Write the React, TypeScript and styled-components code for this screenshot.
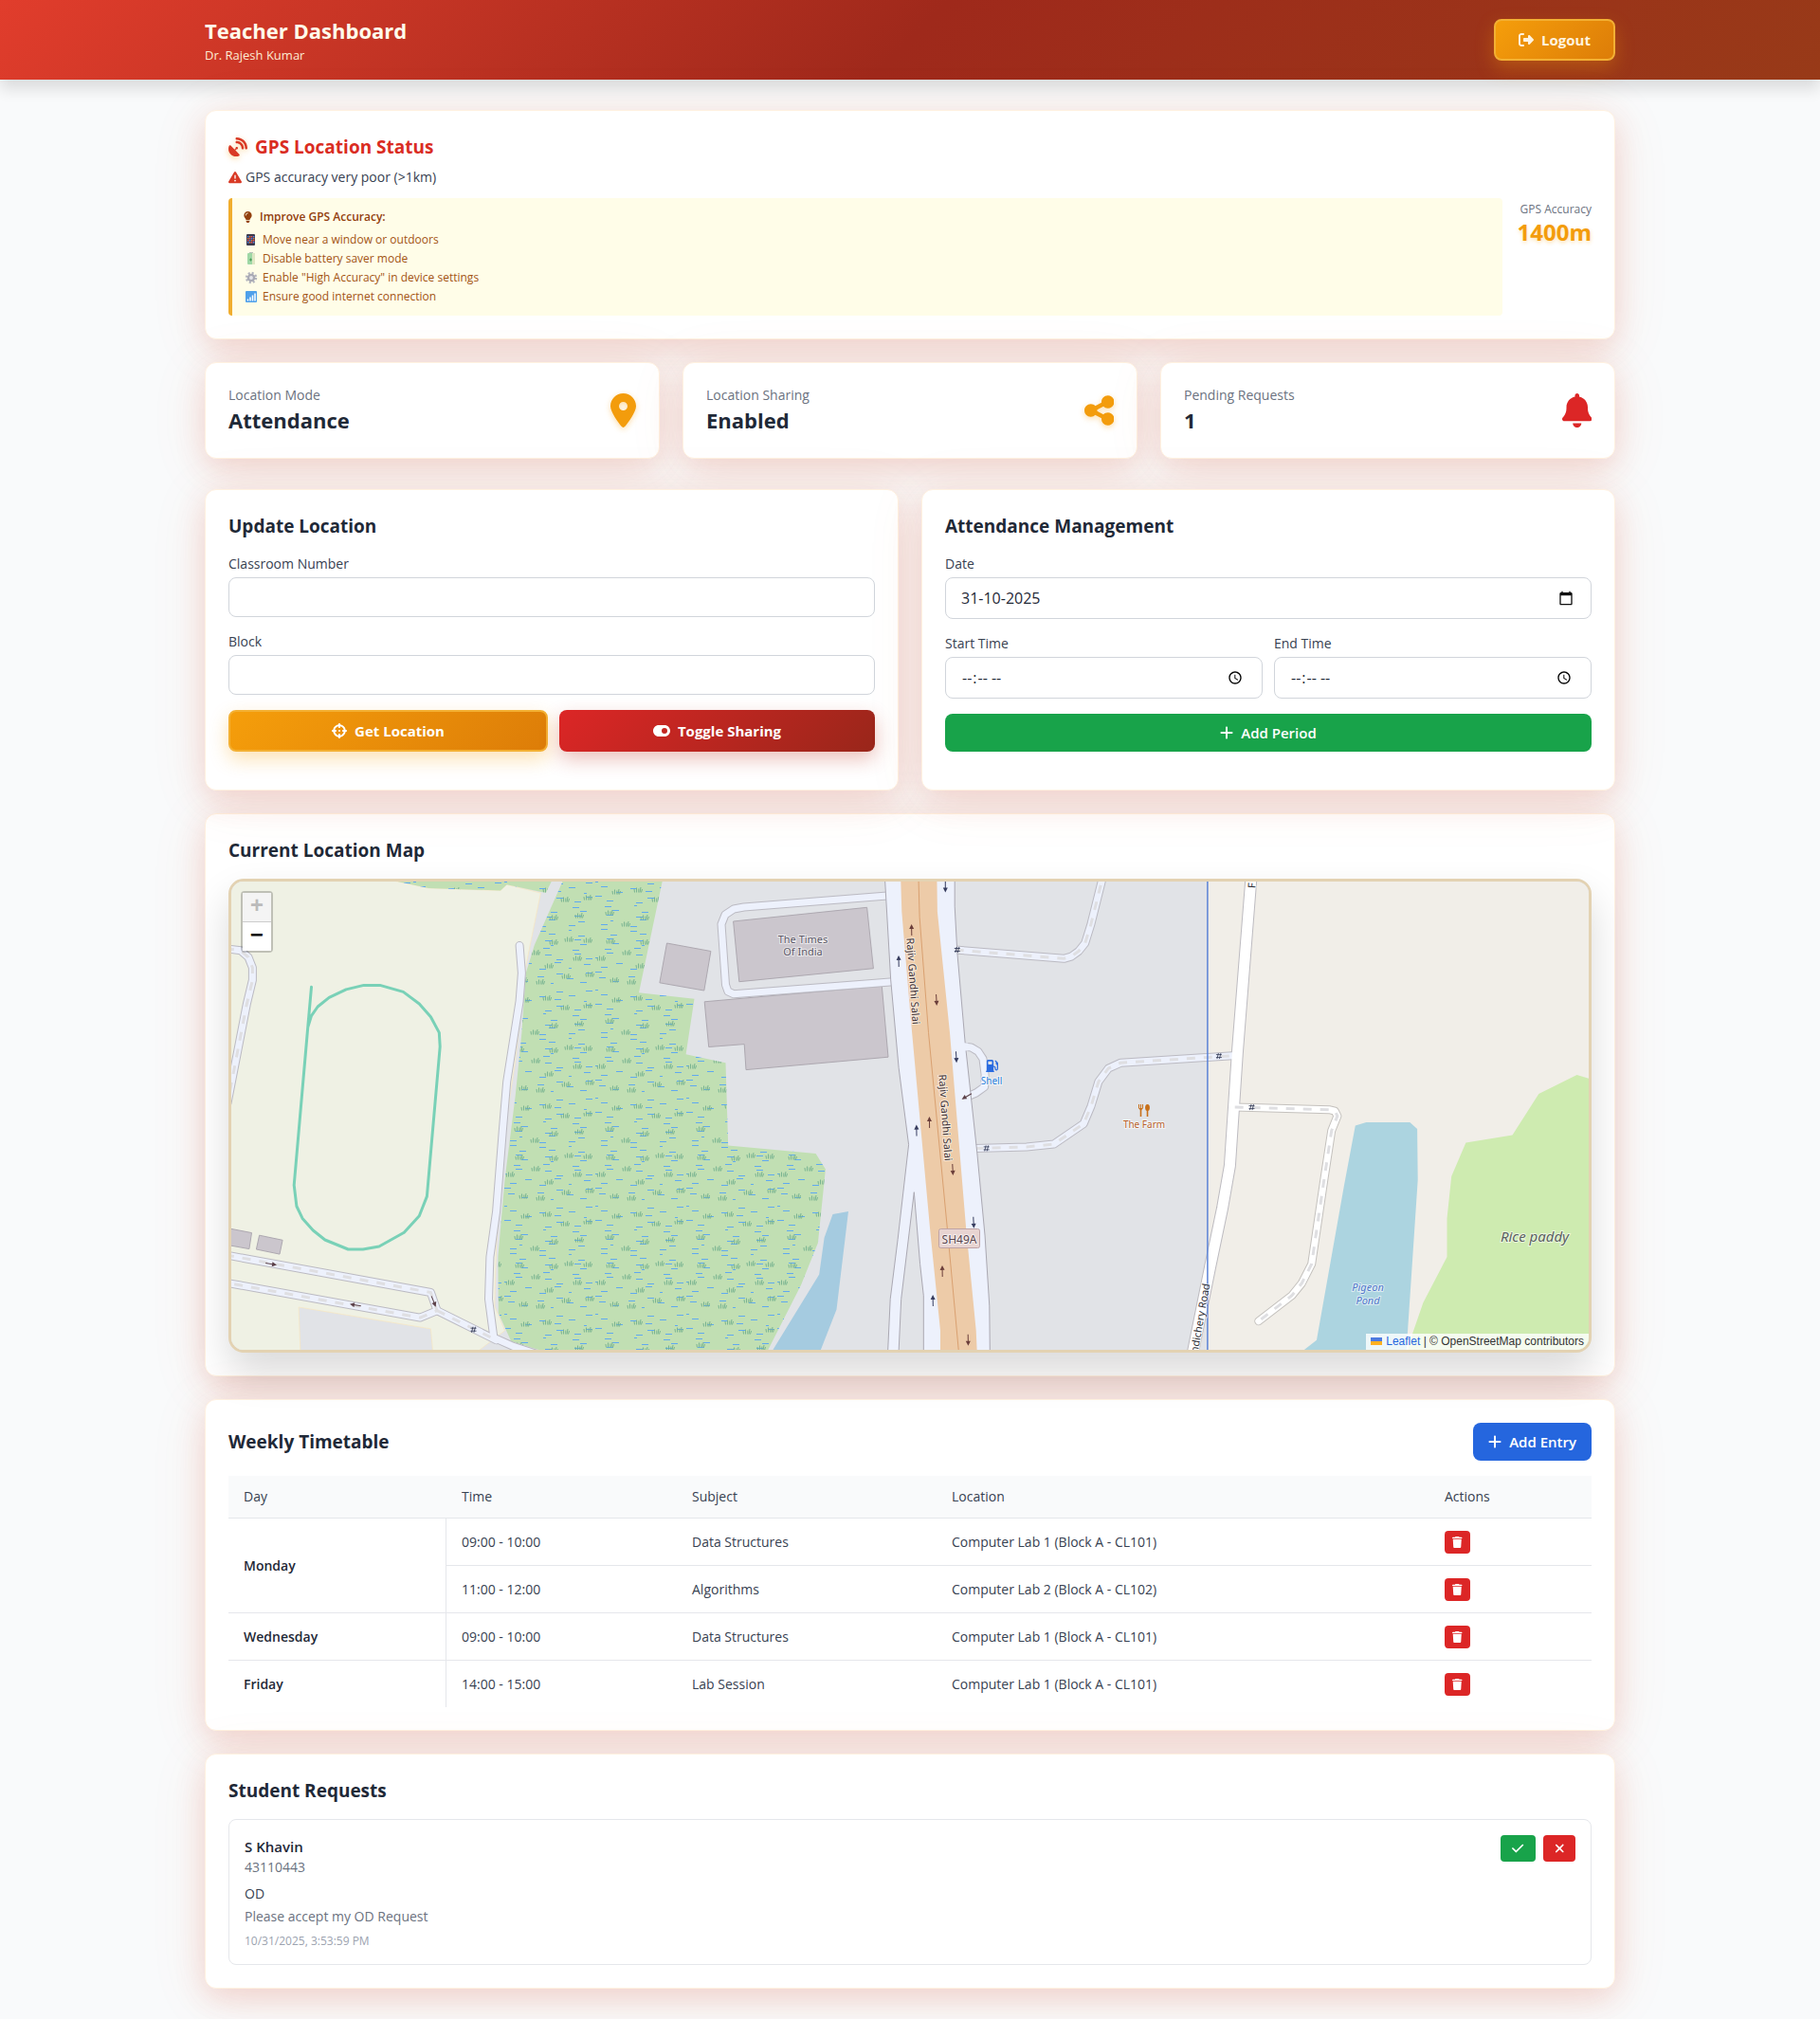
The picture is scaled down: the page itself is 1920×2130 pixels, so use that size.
import React from 'react';
import styled, { createGlobalStyle, css } from 'styled-components';
import {
  FaBell,
  FaCheck,
  FaCrosshairs,
  FaGasPump,
  FaLightbulb,
  FaLocationDot,
  FaPlus,
  FaRightFromBracket,
  FaSatelliteDish,
  FaShareNodes,
  FaToggleOn,
  FaTrash,
  FaTriangleExclamation,
  FaXmark,
} from 'react-icons/fa6';

const color = {
  ink: '#1f2937',
  text: '#374151',
  muted: '#6b7280',
  faint: '#9ca3af',
  line: '#e5e7eb',
  field: '#d1d5db',
  page: '#f9fafb',
  red: '#dc2626',
  vermilion: '#d93a26',
  amber: '#f39c0c',
  green: '#18a34a',
  blue: '#2566de',
};

const GlobalStyle = createGlobalStyle`
  *, *::before, *::after { box-sizing: border-box; }
  body {
    margin: 0;
    background: ${color.page};
    color: ${color.ink};
    font-family: 'Segoe UI', 'Open Sans', sans-serif;
    font-size: 16px;
    line-height: 24px;
  }
  h1, h2, h3, p, ul { margin: 0; padding: 0; }
  ul { list-style: none; }
  button, input { font: inherit; }
`;

// Icons are one em high; $w is the drawing's width on its 512-unit grid.
const Glyph = styled.span<{ $w?: number }>`
  display: flex;
  flex: none;
  svg {
    height: 1em;
    width: calc(1em * ${(p) => p.$w ?? 512} / 512);
  }
`;

/* ---------- page frame ---------- */

const Header = styled.header`
  position: relative;
  background: linear-gradient(135deg, #e13d2c 0%, #9f291b 50%, #983a18 100%);
  box-shadow: 0 10px 15px rgba(0, 0, 0, 0.12);
`;

const Container = styled.div`
  max-width: 1536px;
  margin: 0 auto;
  padding: 0 24px;
`;

const HeaderRow = styled(Container)`
  display: flex;
  align-items: center;
  justify-content: space-between;
  padding-top: 16px;
  padding-bottom: 16px;
`;

const Title = styled.h1`
  font-size: 22px;
  line-height: 32px;
  font-weight: 700;
  color: #fffbeb;
`;

const Subtitle = styled.p`
  font-size: 13px;
  line-height: 20px;
  color: #fdebd3;
`;

const Main = styled(Container).attrs({ as: 'main' })`
  display: flex;
  flex-direction: column;
  gap: 24px;
  padding-top: 32px;
  padding-bottom: 32px;
`;

const Card = styled.section<{ $raised?: boolean }>`
  ${(p) => p.$raised && css`position: relative;`}
  padding: 24px;
  background: #fff;
  border: 1px solid #fff1e0;
  border-radius: 12px;
  box-shadow:
    0 10px 32px rgba(220, 50, 30, 0.16),
    0 8px 60px rgba(217, 119, 60, 0.1);
`;

const CardTitle = styled.h2<{ $gap?: number }>`
  margin-bottom: ${(p) => p.$gap ?? 16}px;
  font-size: 19px;
  line-height: 28px;
  font-weight: 700;
`;

/* ---------- buttons ---------- */

const Button = styled.button<{ $tone: 'amber' | 'red' | 'green' | 'blue'; $grow?: boolean }>`
  display: inline-flex;
  align-items: center;
  justify-content: center;
  gap: 8px;
  padding: 8px 16px;
  border: 0;
  border-radius: 8px;
  color: #fff;
  font-size: 15px;
  font-weight: 600;
  cursor: pointer;
  ${Glyph} { font-size: 16px; }
  ${(p) => p.$grow && css`flex: 1;`}
  ${(p) =>
    p.$tone === 'amber' &&
    css`
      border: 2px solid #f3b033;
      background: linear-gradient(135deg, #f59e0b, #dd7d08);
      font-weight: 700;
      box-shadow: 0 8px 20px rgba(245, 158, 11, 0.3);
    `}
  ${(p) =>
    p.$tone === 'red' &&
    css`
      background: linear-gradient(135deg, #dc2626, #99261a);
      font-weight: 700;
      box-shadow: 0 8px 20px rgba(190, 50, 30, 0.3);
    `}
  ${(p) => p.$tone === 'green' && css`background: ${color.green};`}
  ${(p) => p.$tone === 'blue' && css`background: ${color.blue};`}
`;

const LogoutButton = styled(Button)`
  padding: 8px 24px;
  color: #fff3df;
`;

const SmallButton = styled.button<{ $tone: 'red' | 'green'; $size?: 'xs' }>`
  display: inline-flex;
  align-items: center;
  padding: ${(p) => (p.$size === 'xs' ? '4px 8px' : '4px 12px')};
  border: 0;
  border-radius: 4px;
  background: ${(p) => color[p.$tone]};
  color: #fff;
  font-size: ${(p) => (p.$size === 'xs' ? 12 : 14)}px;
  line-height: ${(p) => (p.$size === 'xs' ? 16 : 20)}px;
  height: ${(p) => (p.$size === 'xs' ? 24 : 28)}px;
  cursor: pointer;
`;

/* ---------- GPS status ---------- */

const GpsCard = styled(Card)`
  display: flex;
  align-items: center;
  gap: 16px;
`;

const GpsBody = styled.div`
  flex: 1;
`;

const GpsTitle = styled(CardTitle)`
  display: flex;
  align-items: center;
  gap: 8px;
  color: #da2c22;
  ${Glyph} {
    font-size: 20px;
    color: ${color.vermilion};
    filter: drop-shadow(0 2px 3px rgba(245, 158, 11, 0.4));
  }
`;

const GpsMessage = styled.p`
  display: flex;
  align-items: center;
  gap: 4px;
  margin-bottom: 12px;
  font-size: 14px;
  line-height: 20px;
  color: ${color.text};
  ${Glyph} { color: ${color.vermilion}; }
`;

const Tips = styled.div`
  padding: 12px;
  border-left: 4px solid #f0ad2e;
  border-radius: 4px;
  background: #fffde8;
  font-size: 12px;
  line-height: 16px;
  color: #a35414;
`;

const TipsTitle = styled.p`
  display: flex;
  align-items: center;
  gap: 8px;
  margin-bottom: 8px;
  font-weight: 600;
  color: #92400e;
`;

const TipList = styled.ul`
  display: flex;
  flex-direction: column;
  gap: 4px;
`;

const Tip = styled.li`
  display: flex;
  align-items: center;
  gap: 4px;
`;

const Accuracy = styled.div`
  text-align: right;
`;

const AccuracyLabel = styled.p`
  font-size: 12px;
  line-height: 16px;
  color: ${color.muted};
`;

const AccuracyValue = styled.p`
  font-size: 24px;
  line-height: 32px;
  font-weight: 700;
  color: ${color.amber};
  text-shadow: 0 2px 4px rgba(245, 158, 11, 0.3);
`;

/* ---------- stat cards ---------- */

const StatGrid = styled.div`
  display: grid;
  grid-template-columns: repeat(3, 1fr);
  gap: 24px;
  margin-bottom: 8px;
`;

const StatCard = styled(Card)`
  display: flex;
  align-items: center;
  justify-content: space-between;
`;

const StatLabel = styled.p`
  font-size: 14px;
  line-height: 20px;
  color: ${color.muted};
`;

const StatValue = styled.p`
  font-size: 22px;
  line-height: 32px;
  font-weight: 700;
`;

const StatIcon = styled(Glyph)<{ $tone: 'amber' | 'red' }>`
  font-size: 36px;
  color: ${(p) => color[p.$tone]};
  ${(p) => p.$tone === 'amber' && css`filter: drop-shadow(0 2px 3px rgba(245, 158, 11, 0.35));`}
`;

/* ---------- forms ---------- */

const FormGrid = styled.div`
  display: grid;
  grid-template-columns: 1fr 1fr;
  gap: 24px;
`;

const Form = styled.form`
  display: flex;
  flex-direction: column;
  gap: 16px;
  margin-bottom: 16px;
`;

const Field = styled.div`
  display: flex;
  flex-direction: column;
  gap: 4px;
  min-width: 0;
`;

const Label = styled.label`
  font-size: 14px;
  line-height: 20px;
  font-weight: 500;
  color: ${color.text};
`;

const Input = styled.input<{ $tall?: boolean }>`
  width: 100%;
  height: ${(p) => (p.$tall ? 44 : 42)}px;
  padding: 8px 16px;
  border: 1px solid ${color.field};
  border-radius: 8px;
  background: #fff;
  color: ${color.ink};
`;

const DateBox = styled.div`
  display: flex;
  align-items: center;
  height: 44px;
  padding-right: 16px;
  border: 1px solid ${color.field};
  border-radius: 8px;
  background: #fff;
`;

const DateInput = styled.input`
  flex: 1;
  min-width: 0;
  padding: 8px 16px;
  border: 0;
  background: none;
  color: ${color.ink};
  outline: 0;
`;

const PickerButton = styled.button`
  display: flex;
  padding: 2px;
  border: 0;
  background: none;
  color: #111;
`;

const TwoColumns = styled.div`
  display: grid;
  grid-template-columns: 1fr 1fr;
  gap: 12px;
`;

const ButtonRow = styled.div`
  display: flex;
  gap: 12px;
`;

/* ---------- map ---------- */

const MapFrame = styled.div`
  position: relative;
  height: 500px;
  overflow: hidden;
  border: 3px solid #e3d2b2;
  border-radius: 16px;
  background: #e1e3e7;
  box-shadow: 0 20px 40px rgba(0, 0, 0, 0.15);
`;

const MapDrawing = styled.svg`
  display: block;
  width: 100%;
  height: 100%;
  font-family: 'Noto Sans', sans-serif;
`;

const ZoomControl = styled.div`
  position: absolute;
  top: 10px;
  left: 10px;
  border: 2px solid rgba(0, 0, 0, 0.2);
  border-radius: 4px;
  background-clip: padding-box;
`;

const ZoomButton = styled.button`
  display: block;
  width: 30px;
  height: 30px;
  padding: 0;
  border: 0;
  background: #fff;
  color: #000;
  font: bold 24px/30px 'Liberation Mono', monospace;
  & + & { border-top: 1px solid #ccc; height: 31px; }
  &:disabled { background: #f4f4f4; color: #bbb; }
`;

const Attribution = styled.div`
  position: absolute;
  right: 0;
  bottom: 0;
  padding: 0 5px;
  background: rgba(255, 255, 255, 0.8);
  font: 12px/17px 'Liberation Sans', sans-serif;
  color: #333;
  a { color: ${color.blue}; text-decoration: none; }
  a svg { margin-right: 4px; }
`;

/* ---------- timetable ---------- */

const CardHead = styled.div`
  display: flex;
  align-items: center;
  justify-content: space-between;
  margin-bottom: 16px;
`;

const Table = styled.table`
  width: 100%;
  table-layout: fixed;
  border-collapse: separate;
  border-spacing: 0;
  font-size: 14px;
  line-height: 20px;
  color: ${color.text};
`;

const HeadCell = styled.th`
  height: 44px;
  padding: 0 16px;
  background: ${color.page};
  font-weight: 500;
  text-align: left;
`;

const Cell = styled.td`
  height: 50px;
  padding: 0 16px;
  border-top: 1px solid ${color.line};
`;

const DayCell = styled.th`
  padding: 0 16px;
  border-top: 1px solid ${color.line};
  border-right: 1px solid ${color.line};
  font-weight: 600;
  text-align: left;
  color: ${color.ink};
`;

const CellAction = styled.div`
  display: flex;
`;

/* ---------- requests ---------- */

const Request = styled.article`
  display: flex;
  align-items: flex-start;
  justify-content: space-between;
  padding: 16px;
  border: 1px solid ${color.line};
  border-radius: 8px;
`;

const RequestName = styled.p`
  font-size: 15px;
  font-weight: 600;
`;

const RequestLine = styled.p<{ $tone?: 'text'; $top?: number }>`
  margin-top: ${(p) => p.$top ?? 0}px;
  font-size: 14px;
  line-height: 20px;
  color: ${(p) => (p.$tone === 'text' ? color.text : color.muted)};
`;

const RequestTime = styled.p`
  margin-top: 8px;
  font-size: 12px;
  line-height: 16px;
  color: ${color.faint};
`;

const RequestActions = styled.div`
  display: flex;
  gap: 8px;
`;

/* ---------- small drawings ---------- */

const tipIcon = { width: 16, height: 14, viewBox: '0 0 16 14', 'aria-hidden': true };

const PhoneIcon = () => (
  <svg {...tipIcon}>
    <rect x="3" y="1" width="9" height="12" rx="1" fill="#3c3a4c" />
    {[3, 5, 7, 9].map((y, r) =>
      [4, 6, 8, 10].map((x, c) => (
        <rect key={`${x}${y}`} x={x} y={y} width="1.4" height="1.4" fill={['#4c8df0', '#f07a3c', '#e8546a'][(r + c) % 3]} />
      )),
    )}
  </svg>
);

const BatteryIcon = () => (
  <svg {...tipIcon}>
    <rect x="6" y="0" width="4" height="2" fill="#b9c0b8" />
    <rect x="4" y="1" width="8" height="12" rx="1" fill="#9fd7a5" />
    <rect x="9" y="1" width="3" height="12" fill="#dfe7c4" />
    <path d="M6 8h3M7.500 6.500v3" stroke="#4b9a58" fill="none" />
  </svg>
);

const GearIcon = () => (
  <svg {...tipIcon}>
    <circle cx="8" cy="7" r="5" fill="none" stroke="#b4b5be" strokeWidth="2.400" strokeDasharray="2 1.930" />
    <circle cx="8" cy="7" r="3.100" fill="#e6e6ea" stroke="#a9aab4" strokeWidth="2.400" />
  </svg>
);

const SignalIcon = () => (
  <svg {...tipIcon}>
    <rect x="2" y="1" width="12" height="12" rx="1" fill="#4fa0ea" />
    <path d="M4.500 11.500v-2M7 11.500v-4M9.500 11.500v-6M12 11.500v-8" stroke="#fff" strokeWidth="1.500" />
  </svg>
);

const CalendarIcon = () => (
  <svg width="16" height="16" viewBox="0 0 24 24" aria-hidden="true">
    <path
      fill="currentColor"
      d="M20 3h-1V1h-2v2H7V1H5v2H4c-1.100 0-2 .9-2 2v16c0 1.100.9 2 2 2h16c1.100 0 2-.9 2-2V5c0-1.100-.9-2-2-2zm0 18H4V8h16v13z"
    />
  </svg>
);

/* ---------- map drawing ---------- */

type Sheet = (points: string) => string;
const sheet = (sx: number, ox: number): Sheet => (points) =>
  points
    .split(' ')
    .map((pair) => {
      const [x, y] = pair.split(',').map(Number);
      return `${(x * sx + ox).toFixed(1)},${(y * 0.36992 - 70).toFixed(1)}`;
    })
    .join(' ');
const west = sheet(0.44643, -24);
const east = sheet(0.52296, 656);

const MARSH = [
  west('430,185 812,185 797,222 705,198 690,215 520,208'),
  west('838,185 1073,185 1017,506 1148,524 1128,682 1222,706 1228,942 1435,965 1458,1010 1440,1220 1400,1340 1320,1530 795,1530 715,1500 685,1420 684,1260 700,1040 725,800 740,620 750,450 770,370'),
];

const BUILDINGS = [
  west('50,1179 102,1191 96,1237 50,1227'),
  west('120,1198 175,1212 168,1252 113,1238'),
  west('1083,365 1187,388 1171,500 1066,478'),
  '529.600,42 670.600,27.300 677.400,91.700 535.800,105.700',
  '499.200,126.800 686.300,110.200 693,185.200 543,198.600 541.200,171.600 503.700,174.500',
];

const SERVICE_ROADS = [
  west('735,372 740,450 735,530 705,760 695,900 680,1130 665,1260 662,1380 674,1490 720,1515 810,1550'),
  '692,15 540.700,27 530,29 521,35 517,45 521.500,109 524,116 530,118.700 676,107.600 698,105.700',
  east('222,660 238,662 252,674 262,695 266,740 265,775 248,792 222,808'),
];

const TRACKS = [
  west('40,380 76,386 94,405 104,435 104,470 90,540 58,740 45,820'),
  west('40,1254 525,1361 540,1413 500,1433 40,1333'),
  west('540,1413 680,1497'),
  east('206,384 425,409 440,403 455,388 468,365 480,310 503,180'),
  east('246,950 350,946 405,938 465,880 480,830 495,760 515,722 540,706 765,686'),
];

const LANES = [east('770,833 960,840 972,844 977,858 965,900 950,1040 925,1280 905,1335 885,1370 818,1443')];

const TRUNK_SIDE = east(
  '64,180 76,470 92,720 112,940 90,1210 75,1380 70,1530 92,1530 97,1380 123,1075 135,1280 142,1370 142,1530 276,1530 275,1400 266,1200 250,960 226,650 210,390 205,260 205,180',
);
const TRUNK = east('96,180 98,275 115,560 155,1180 176,1470 176,1530 250,1530 248,1470 228,1180 195,620 170,275 169,180');
const TRUNK_AXIS = east('132,180 134,290 152,620 190,1180 213,1530');
const MAIN_ROAD = east('803,180 775,680 760,1000 745,1120 720,1290 685,1535');

const RUNNING_TRACK = west(
  '243,490 235,600 202,1055 208,1115 222,1150 247,1184 275,1211 330,1238 365,1238 403,1230 462,1190 498,1143 516,1087 547,660 545,620 525,575 498,538 460,504 405,485 367,485 325,497 285,520 258,546 243,572 235,604',
);

const ARROWS: [string, number, string][] = [
  [east('118,327'), -91, '#6b3e3a'],
  [east('92,416'), -91, '#363c5e'],
  [east('154,876'), -91, '#6b3e3a'],
  [east('128,899'), -91, '#363c5e'],
  [east('180,1300'), -91, '#6b3e3a'],
  [east('161,1384'), -91, '#363c5e'],
  [east('186,204'), 90, '#363c5e'],
  [east('168,527'), 87, '#6b3e3a'],
  [east('208,690'), 87, '#363c5e'],
  [east('201,1011'), 87, '#6b3e3a'],
  [east('243,1162'), 87, '#363c5e'],
  [east('232,1497'), 89, '#6b3e3a'],
  [east('229,802'), 150, '#5b4048'],
  [west('148,1280'), 10, '#5b4048'],
  [west('347,1397'), 190, '#5b4048'],
  [west('532,1387'), 68, '#5b4048'],
];

const GATES = [east('210,384'), east('269,950'), east('738,687'), east('804,833'), west('626,1467')];

const TUFTS = [
  [22, 11], [45, 9], [64, 19], [88, 17], [15, 33], [52, 38], [79, 36], [32, 45], [16, 63], [52, 64],
  [68, 61], [33, 75], [6, 81], [77, 81], [47, 89], [88, 62], [65, 100], [20, 104], [38, 106], [90, 98],
];
const DASHES = Array.from({ length: 66 }, (_, i) => {
  const row = Math.floor(i / 3);
  const jitter = (row * row * 17 + (i % 3) * 71 + row * 13) % 24;
  return [(i % 3) * 32 + jitter, row * 5 + (jitter % 3)];
});

const Line = ({ points, width, stroke, dash }: { points: string; width: number; stroke: string; dash?: string }) => (
  <polyline
    points={points}
    fill="none"
    stroke={stroke}
    strokeWidth={width}
    strokeDasharray={dash}
    strokeLinejoin="round"
    strokeLinecap={dash ? 'butt' : 'round'}
  />
);

const MapLabel = ({
  x, y, size, fill, angle = 0, italic, anchor = 'middle', children,
}: {
  x: number; y: number; size: number; fill: string; angle?: number; italic?: boolean;
  anchor?: 'middle' | 'end'; children: string;
}) => (
  <text
    transform={`translate(${x} ${y}) rotate(${angle})`}
    fontSize={size}
    fill={fill}
    fontStyle={italic ? 'italic' : 'normal'}
    textAnchor={anchor}
    dominantBaseline="central"
    stroke="rgba(255,255,255,0.6)"
    strokeWidth="2"
    paintOrder="stroke"
  >
    {children}
  </text>
);

const CampusMap = () => (
  <MapDrawing viewBox="0 0 1432 494" preserveAspectRatio="xMidYMid slice" role="img" aria-label="Map around Rajiv Gandhi Salai">
    <defs>
      <pattern id="marsh" width="96" height="114" patternUnits="userSpaceOnUse">
        <rect width="96" height="114" fill="#c1dfb3" />
        {DASHES.map(([x, y], i) => (
          <rect key={i} x={x} y={y} width={i % 8 === 0 ? 3 : 7} height="1" fill="#5fa9f0" />
        ))}
        {TUFTS.map(([x, y], i) => (
          <path key={i} transform={`translate(${x} ${y})`} d="M-3.500 2.500L-4-1M-1.500 2.500V-2.500M.8 2.500V-1.500M2 2.500L3-3M3.500 2.500L4.500-1" stroke="#78b390" fill="none" />
        ))}
      </pattern>
    </defs>
    <rect width="1432" height="494" fill="#e1e3e7" />
    <polygon points={east('715,180 1500,180 1500,1540 715,1540')} fill="#f1eee8" />
    <polygon
      points={west('40,180 430,185 520,208 690,215 705,198 785,222 750,430 725,700 700,900 680,1230 676,1400 700,1470 635,1530 530,1530 525,1465 213,1403 217,1530 40,1530')}
      fill="#eff1e4"
      stroke="#f8e6c0"
      strokeWidth="0.700"
    />
    {MARSH.map((points) => <polygon key={points} points={points} fill="url(#marsh)" />)}
    <polygon points={west('1475,1138 1512,1130 1484,1410 1445,1530 1331,1530 1443,1310 1455,1205')} fill="#a5cbe0" />
    <polygon points={east('1013,885 1035,876 1123,876 1138,895 1139,1040 1116,1530 905,1530 935,1497 990,1060')} fill="#acd4e0" />
    <polygon points={east('1500,758 1460,741 1383,795 1330,912 1236,934 1207,1030 1198,1150 1198,1260 1150,1390 1128,1480 1118,1530 1500,1530')} fill="#ceebb0" />
    {BUILDINGS.map((points) => <polygon key={points} points={points} fill="#cbc6cd" stroke="#ada8b0" />)}

    {[...SERVICE_ROADS, ...TRACKS].map((p) => <Line key={p} points={p} width={9} stroke="#bbbac2" />)}
    {LANES.map((p) => <Line key={p} points={p} width={9} stroke="#c4c1bd" />)}
    <Line points={MAIN_ROAD} width={13} stroke="#bdbbc0" />
    {[...SERVICE_ROADS, ...TRACKS].map((p) => <Line key={p} points={p} width={7} stroke="#edf1fc" />)}
    {LANES.map((p) => <Line key={p} points={p} width={7} stroke="#fff" />)}
    <Line points={MAIN_ROAD} width={11} stroke="#fff" />
    {[...TRACKS, ...LANES].map((p) => <Line key={p} points={p} width={3} stroke="#dfdfe2" dash="9 9" />)}

    <polygon points={TRUNK_SIDE} fill="#edf1fc" stroke="#aaa8b2" />
    <polygon points={east('200,648 232,650 232,672 200,672')} fill="#edf1fc" />
    <polygon points={TRUNK} fill="#edcba8" />
    <Line points={TRUNK_AXIS} width={1} stroke="#d9a070" />
    <Line points={RUNNING_TRACK} width={3} stroke="#79d1b7" />
    <Line points={east('715,180 715,1540')} width={1.5} stroke="#5a82d6" />

    {ARROWS.map(([at, angle, stroke]) => (
      <g key={at} transform={`translate(${at}) rotate(${angle})`}>
        <path d="M-6 0H3" stroke={stroke} />
        <path d="M6 0L1-2.500V2.500Z" fill={stroke} />
      </g>
    ))}
    {GATES.map((at) => (
      <path key={at} transform={`translate(${at})`} d="M-3-1.500H3M-3 1.500H3M-2 3L-.5-3M.5 3L2-3" stroke="#2c3350" strokeWidth="0.800" fill="none" />
    ))}

    <MapLabel x={603} y={60} size={11} fill="#5c5866">The Times</MapLabel>
    <MapLabel x={603} y={73} size={11} fill="#5c5866">Of India</MapLabel>
    <MapLabel x={720} y={105} size={11} fill="#3d3034" angle={86}>Rajiv Gandhi Salai</MapLabel>
    <MapLabel x={754} y={249} size={11} fill="#3d3034" angle={86}>Rajiv Gandhi Salai</MapLabel>
    <MapLabel x={1028} y={424} size={11} fill="#2f3038" angle={-80} anchor="end">ndichery Road</MapLabel>
    <MapLabel x={1076} y={4} size={11} fill="#2f3038" angle={-86}>F</MapLabel>
    <rect x="746.500" y="366.500" width="43" height="20" rx="2" fill="#e8d4d1" stroke="#bfa3a6" />
    <MapLabel x={768} y={377} size={12} fill="#58444c">SH49A</MapLabel>
    <FaGasPump x={796} y={188} size={13} color="#2a6be0" />
    <MapLabel x={802} y={210} size={10} fill="#2a80dc">Shell</MapLabel>
    <g transform="translate(963 241)" fill="#c8701a" stroke="#c8701a">
      <path d="M-5.500-6V-2M-3.500-6V-2M-1.500-6V-2" fill="none" />
      <path d="M-6-2H-1L-3.500 1Z" stroke="none" />
      <path d="M-3.500 0V7M3.500 0V7" fill="none" strokeWidth="1.600" />
      <ellipse cx="3.500" cy="-2.500" rx="2.400" ry="3.600" stroke="none" />
    </g>
    <MapLabel x={963} y={256} size={10} fill="#b9622c">The Farm</MapLabel>
    <MapLabel x={1375} y={374} size={15} fill="#5a6160" italic>Rice paddy</MapLabel>
    <MapLabel x={1199} y={427} size={11} fill="#4f76cb" italic>Pigeon</MapLabel>
    <MapLabel x={1199} y={441} size={11} fill="#4f76cb" italic>Pond</MapLabel>
  </MapDrawing>
);

/* ---------- data ---------- */

const TIPS = [
  { icon: <PhoneIcon />, text: 'Move near a window or outdoors' },
  { icon: <BatteryIcon />, text: 'Disable battery saver mode' },
  { icon: <GearIcon />, text: 'Enable "High Accuracy" in device settings' },
  { icon: <SignalIcon />, text: 'Ensure good internet connection' },
];

const STATS = [
  { label: 'Location Mode', value: 'Attendance', icon: <FaLocationDot />, width: 384, tone: 'amber' as const },
  { label: 'Location Sharing', value: 'Enabled', icon: <FaShareNodes />, width: 448, tone: 'amber' as const },
  { label: 'Pending Requests', value: '1', icon: <FaBell />, width: 448, tone: 'red' as const },
];

const COLUMNS = [
  { name: 'Day', width: 230 },
  { name: 'Time', width: 243 },
  { name: 'Subject', width: 274 },
  { name: 'Location', width: 520 },
  { name: 'Actions', width: 171 },
];

const TIMETABLE = [
  {
    day: 'Monday',
    periods: [
      { time: '09:00 - 10:00', subject: 'Data Structures', place: 'Computer Lab 1 (Block A - CL101)' },
      { time: '11:00 - 12:00', subject: 'Algorithms', place: 'Computer Lab 2 (Block A - CL102)' },
    ],
  },
  { day: 'Wednesday', periods: [{ time: '09:00 - 10:00', subject: 'Data Structures', place: 'Computer Lab 1 (Block A - CL101)' }] },
  { day: 'Friday', periods: [{ time: '14:00 - 15:00', subject: 'Lab Session', place: 'Computer Lab 1 (Block A - CL101)' }] },
];

export default function App() {
  const stay = (event: React.FormEvent) => event.preventDefault();

  return (
    <>
      <GlobalStyle />
      <Header>
        <HeaderRow>
          <div>
            <Title>Teacher Dashboard</Title>
            <Subtitle>Dr. Rajesh Kumar</Subtitle>
          </div>
          <LogoutButton type="button" $tone="amber">
            <Glyph><FaRightFromBracket /></Glyph>
            Logout
          </LogoutButton>
        </HeaderRow>
      </Header>

      <Main>
        <GpsCard $raised>
          <GpsBody>
            <GpsTitle $gap={8}>
              <Glyph><FaSatelliteDish /></Glyph>
              GPS Location Status
            </GpsTitle>
            <GpsMessage>
              <Glyph><FaTriangleExclamation /></Glyph>
              GPS accuracy very poor (&gt;1km)
            </GpsMessage>
            <Tips>
              <TipsTitle>
                <Glyph $w={384}><FaLightbulb /></Glyph>
                Improve GPS Accuracy:
              </TipsTitle>
              <TipList>
                {TIPS.map((tip) => (
                  <Tip key={tip.text}>
                    {tip.icon}
                    {tip.text}
                  </Tip>
                ))}
              </TipList>
            </Tips>
          </GpsBody>
          <Accuracy>
            <AccuracyLabel>GPS Accuracy</AccuracyLabel>
            <AccuracyValue>1400m</AccuracyValue>
          </Accuracy>
        </GpsCard>

        <StatGrid>
          {STATS.map((stat) => (
            <StatCard $raised key={stat.label}>
              <div>
                <StatLabel>{stat.label}</StatLabel>
                <StatValue>{stat.value}</StatValue>
              </div>
              <StatIcon $tone={stat.tone} $w={stat.width}>{stat.icon}</StatIcon>
            </StatCard>
          ))}
        </StatGrid>

        <FormGrid>
          <Card $raised>
            <CardTitle>Update Location</CardTitle>
            <Form onSubmit={stay}>
              <Field>
                <Label htmlFor="classroom">Classroom Number</Label>
                <Input id="classroom" type="text" />
              </Field>
              <Field>
                <Label htmlFor="block">Block</Label>
                <Input id="block" type="text" />
              </Field>
              <ButtonRow>
                <Button type="button" $tone="amber" $grow>
                  <Glyph><FaCrosshairs /></Glyph>
                  Get Location
                </Button>
                <Button type="button" $tone="red" $grow>
                  <Glyph $w={576}><FaToggleOn /></Glyph>
                  Toggle Sharing
                </Button>
              </ButtonRow>
            </Form>
          </Card>

          <Card $raised>
            <CardTitle>Attendance Management</CardTitle>
            <Form onSubmit={stay}>
              <Field>
                <Label htmlFor="date">Date</Label>
                <DateBox>
                  <DateInput id="date" type="text" defaultValue="31-10-2025" />
                  <PickerButton type="button" aria-label="Open calendar">
                    <CalendarIcon />
                  </PickerButton>
                </DateBox>
              </Field>
              <TwoColumns>
                <Field>
                  <Label htmlFor="start">Start Time</Label>
                  <Input id="start" type="time" $tall />
                </Field>
                <Field>
                  <Label htmlFor="end">End Time</Label>
                  <Input id="end" type="time" $tall />
                </Field>
              </TwoColumns>
              <Button type="submit" $tone="green">
                <Glyph $w={448}><FaPlus /></Glyph>
                Add Period
              </Button>
            </Form>
          </Card>
        </FormGrid>

        <Card>
          <CardTitle>Current Location Map</CardTitle>
          <MapFrame>
            <CampusMap />
            <ZoomControl>
              <ZoomButton type="button" aria-label="Zoom in" disabled>+</ZoomButton>
              <ZoomButton type="button" aria-label="Zoom out">−</ZoomButton>
            </ZoomControl>
            <Attribution>
              <a href="https://leafletjs.com">
                <svg width="12" height="8" viewBox="0 0 12 8" aria-hidden="true">
                  <path fill="#4C7BE1" d="M0 0h12v4H0z" />
                  <path fill="#FFB020" d="M0 4h12v4H0z" />
                </svg>
                Leaflet
              </a>{' '}
              | © OpenStreetMap contributors
            </Attribution>
          </MapFrame>
        </Card>

        <Card>
          <CardHead>
            <CardTitle $gap={0}>Weekly Timetable</CardTitle>
            <Button type="button" $tone="blue">
              <Glyph $w={448}><FaPlus /></Glyph>
              Add Entry
            </Button>
          </CardHead>
          <Table>
            <colgroup>
              {COLUMNS.map((column) => <col key={column.name} width={column.width} />)}
            </colgroup>
            <thead>
              <tr>
                {COLUMNS.map((column) => <HeadCell key={column.name} scope="col">{column.name}</HeadCell>)}
              </tr>
            </thead>
            <tbody>
              {TIMETABLE.map(({ day, periods }) =>
                periods.map((period, index) => (
                  <tr key={day + period.time}>
                    {index === 0 && <DayCell scope="rowgroup" rowSpan={periods.length}>{day}</DayCell>}
                    <Cell>{period.time}</Cell>
                    <Cell>{period.subject}</Cell>
                    <Cell>{period.place}</Cell>
                    <Cell>
                      <CellAction>
                        <SmallButton type="button" $tone="red" $size="xs" aria-label="Delete entry">
                          <Glyph $w={448}><FaTrash /></Glyph>
                        </SmallButton>
                      </CellAction>
                    </Cell>
                  </tr>
                )),
              )}
            </tbody>
          </Table>
        </Card>

        <Card>
          <CardTitle>Student Requests</CardTitle>
          <Request>
            <div>
              <RequestName>S Khavin</RequestName>
              <RequestLine>43110443</RequestLine>
              <RequestLine $tone="text" $top={8}>OD</RequestLine>
              <RequestLine $top={4}>Please accept my OD Request</RequestLine>
              <RequestTime>10/31/2025, 3:53:59 PM</RequestTime>
            </div>
            <RequestActions>
              <SmallButton type="button" $tone="green" aria-label="Approve request">
                <Glyph $w={448}><FaCheck /></Glyph>
              </SmallButton>
              <SmallButton type="button" $tone="red" aria-label="Reject request">
                <Glyph $w={384}><FaXmark /></Glyph>
              </SmallButton>
            </RequestActions>
          </Request>
        </Card>
      </Main>
    </>
  );
}
